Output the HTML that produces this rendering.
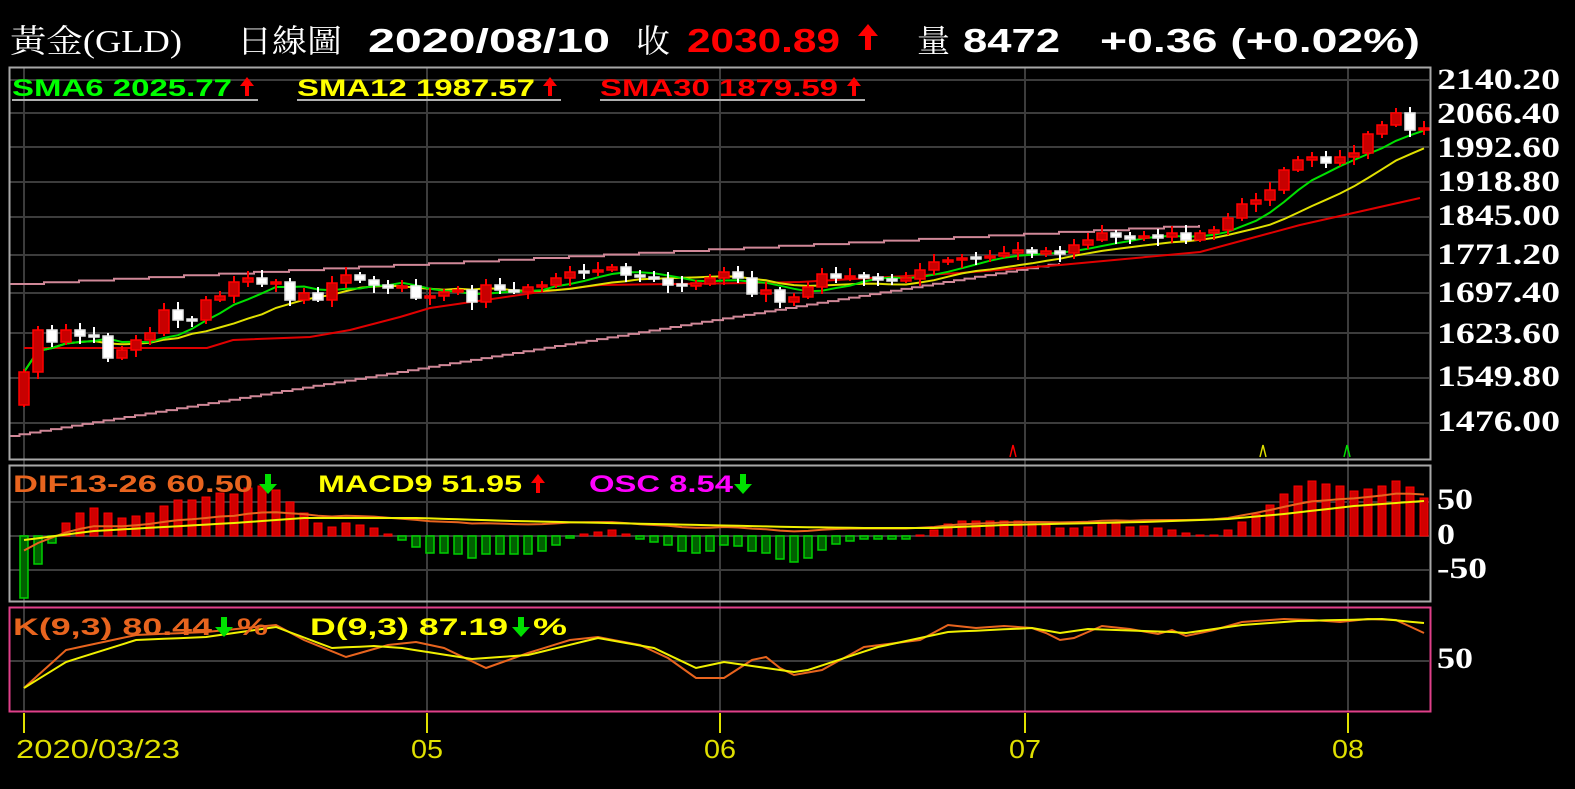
<!DOCTYPE html>
<html><head><meta charset="utf-8"><style>
html,body{margin:0;padding:0;background:#000;width:1575px;height:789px;overflow:hidden}
svg{display:block}
.h{font-family:"Liberation Serif","Noto Serif CJK SC","Noto Sans CJK TC",serif;fill:#fff}
.b{font-family:"Liberation Sans","Noto Sans CJK TC",sans-serif;font-weight:bold}
.n{font-family:"Liberation Sans",sans-serif;font-weight:bold}
.r{font-family:"Liberation Serif",serif;font-weight:bold;fill:#fff}
.x{font-family:"Liberation Sans",sans-serif;fill:#e0e000}
</style></head><body>
<svg id="s" width="1575" height="789" viewBox="0 0 1575 789" xmlns="http://www.w3.org/2000/svg">
<rect width="1575" height="789" fill="#000"/>
<text class="h" x="10" y="52" font-size="32" textLength="172" lengthAdjust="spacingAndGlyphs">黃金(GLD)</text>
<text class="h" x="237" y="52" font-size="32" textLength="105" lengthAdjust="spacingAndGlyphs">日線圖</text>
<text class="b" x="368" y="52" font-size="33" fill="#fff" textLength="242" lengthAdjust="spacingAndGlyphs">2020/08/10</text>
<text class="h" x="636" y="52" font-size="32" textLength="34" lengthAdjust="spacingAndGlyphs">收</text>
<text class="b" x="687" y="52" font-size="33" fill="#ff0000" textLength="153" lengthAdjust="spacingAndGlyphs">2030.89</text>
<path d="M868 24 L878 36 L871 36 L871 50 L865 50 L865 36 L858 36 Z" fill="#ff0000"/>
<text class="h" x="917" y="52" font-size="32" textLength="33" lengthAdjust="spacingAndGlyphs">量</text>
<text class="b" x="963" y="52" font-size="33" fill="#fff" textLength="97" lengthAdjust="spacingAndGlyphs">8472</text>
<text class="b" x="1100" y="52" font-size="33" fill="#fff" textLength="320" lengthAdjust="spacingAndGlyphs">+0.36 (+0.02%)</text>

<g id="grid" stroke="#3c3c3c" stroke-width="2" fill="none">
<line x1="10" y1="80" x2="1429" y2="80"/><line x1="10" y1="113" x2="1429" y2="113"/><line x1="10" y1="147" x2="1429" y2="147"/><line x1="10" y1="182" x2="1429" y2="182"/><line x1="10" y1="217" x2="1429" y2="217"/><line x1="10" y1="255" x2="1429" y2="255"/><line x1="10" y1="293" x2="1429" y2="293"/><line x1="10" y1="333" x2="1429" y2="333"/><line x1="10" y1="378" x2="1429" y2="378"/><line x1="10" y1="423" x2="1429" y2="423"/>
<line x1="10" y1="502" x2="1429" y2="502"/><line x1="10" y1="536" x2="1429" y2="536"/><line x1="10" y1="570" x2="1429" y2="570"/>
<line x1="10" y1="661" x2="1429" y2="661"/>
<line x1="24" y1="68" x2="24" y2="712"/><line x1="427" y1="68" x2="427" y2="712"/><line x1="720" y1="68" x2="720" y2="712"/><line x1="1025" y1="68" x2="1025" y2="712"/><line x1="1348" y1="68" x2="1348" y2="712"/>
</g>
<g id="dyn"></g>
<rect x="9.5" y="67.5" width="1421" height="392" fill="none" stroke="#a8a8a8" stroke-width="2"/>
<rect x="9.5" y="465.5" width="1421" height="136" fill="none" stroke="#a8a8a8" stroke-width="2"/>
<rect x="9.5" y="607.5" width="1421" height="104" fill="none" stroke="#e0408a" stroke-width="2"/>

<path d="M1010 457 L1013 445 L1016 457" stroke="#ff0000" stroke-width="1.5" fill="none"/>
<path d="M1260 457 L1263 445 L1266 457" stroke="#e0e000" stroke-width="1.5" fill="none"/>
<path d="M1344 457 L1347 445 L1350 457" stroke="#00e000" stroke-width="1.5" fill="none"/>

<text class="n" x="12" y="96" font-size="24" fill="#00ff00" textLength="220" lengthAdjust="spacingAndGlyphs">SMA6 2025.77</text>
<text class="n" x="297" y="96" font-size="24" fill="#ffff00" textLength="238" lengthAdjust="spacingAndGlyphs">SMA12 1987.57</text>
<text class="n" x="600" y="96" font-size="24" fill="#ff0000" textLength="238" lengthAdjust="spacingAndGlyphs">SMA30 1879.59</text>
<g fill="#ff0000">
<path d="M247 77 L254 86 L249 86 L249 96 L245 96 L245 86 L240 86 Z"/>
<path d="M550 77 L557 86 L552 86 L552 96 L548 96 L548 86 L543 86 Z"/>
<path d="M854 77 L861 86 L856 86 L856 96 L852 96 L852 86 L847 86 Z"/>
</g>
<g stroke="#b0b0b0" stroke-width="2"><line x1="12" y1="100" x2="258" y2="100"/><line x1="297" y1="100" x2="561" y2="100"/><line x1="600" y1="100" x2="865" y2="100"/></g>

<text class="n" x="13" y="492" font-size="24" fill="#e8641e" textLength="240" lengthAdjust="spacingAndGlyphs">DIF13-26 60.50</text>
<path d="M268 494 L277 484 L271 484 L271 474 L265 474 L265 484 L259 484 Z" fill="#00e000"/>
<text class="n" x="318" y="492" font-size="24" fill="#ffff00" textLength="204" lengthAdjust="spacingAndGlyphs">MACD9 51.95</text>
<path d="M538 474 L545 483 L540 483 L540 493 L536 493 L536 483 L531 483 Z" fill="#ff0000"/>
<text class="n" x="589" y="492" font-size="24" fill="#ff00ff" textLength="144" lengthAdjust="spacingAndGlyphs">OSC 8.54</text>
<path d="M743 494 L752 484 L746 484 L746 474 L740 474 L740 484 L734 484 Z" fill="#00e000"/>

<text class="n" x="13" y="635" font-size="24" fill="#e8641e" textLength="199" lengthAdjust="spacingAndGlyphs">K(9,3) 80.44</text>
<path d="M224 637 L233 627 L227 627 L227 617 L221 617 L221 627 L215 627 Z" fill="#00e000"/>
<text class="n" x="237" y="635" font-size="24" fill="#e8641e" textLength="31" lengthAdjust="spacingAndGlyphs">%</text>
<text class="n" x="310" y="635" font-size="24" fill="#ffff00" textLength="198" lengthAdjust="spacingAndGlyphs">D(9,3) 87.19</text>
<path d="M521 637 L530 627 L524 627 L524 617 L518 617 L518 627 L512 627 Z" fill="#00e000"/>
<text class="n" x="533" y="635" font-size="24" fill="#ffff00" textLength="34" lengthAdjust="spacingAndGlyphs">%</text>

<g class="r" font-size="30">
<text x="1437" y="89" textLength="123" lengthAdjust="spacingAndGlyphs">2140.20</text>
<text x="1437" y="123" textLength="123" lengthAdjust="spacingAndGlyphs">2066.40</text>
<text x="1437" y="157" textLength="123" lengthAdjust="spacingAndGlyphs">1992.60</text>
<text x="1437" y="191" textLength="123" lengthAdjust="spacingAndGlyphs">1918.80</text>
<text x="1437" y="225" textLength="123" lengthAdjust="spacingAndGlyphs">1845.00</text>
<text x="1437" y="264" textLength="123" lengthAdjust="spacingAndGlyphs">1771.20</text>
<text x="1437" y="302" textLength="123" lengthAdjust="spacingAndGlyphs">1697.40</text>
<text x="1437" y="343" textLength="123" lengthAdjust="spacingAndGlyphs">1623.60</text>
<text x="1437" y="386" textLength="123" lengthAdjust="spacingAndGlyphs">1549.80</text>
<text x="1437" y="431" textLength="123" lengthAdjust="spacingAndGlyphs">1476.00</text>
<text x="1437" y="509" textLength="36" lengthAdjust="spacingAndGlyphs">50</text>
<text x="1437" y="544" textLength="18" lengthAdjust="spacingAndGlyphs">0</text>
<text x="1437" y="578" textLength="50" lengthAdjust="spacingAndGlyphs">-50</text>
<text x="1437" y="668" textLength="36" lengthAdjust="spacingAndGlyphs">50</text>
</g>

<g stroke="#e0e000" stroke-width="2"><line x1="24" y1="713" x2="24" y2="733"/><line x1="427" y1="713" x2="427" y2="733"/><line x1="720" y1="713" x2="720" y2="733"/><line x1="1025" y1="713" x2="1025" y2="733"/><line x1="1348" y1="713" x2="1348" y2="733"/></g>
<g class="x" font-size="26">
<text x="16" y="758" textLength="164" lengthAdjust="spacingAndGlyphs">2020/03/23</text>
<text x="411" y="758" textLength="32" lengthAdjust="spacingAndGlyphs">05</text>
<text x="704" y="758" textLength="32" lengthAdjust="spacingAndGlyphs">06</text>
<text x="1009" y="758" textLength="32" lengthAdjust="spacingAndGlyphs">07</text>
<text x="1332" y="758" textLength="32" lengthAdjust="spacingAndGlyphs">08</text>
</g>
</svg>
<script>
(function(){
var C=[372,330,342,330,336,336,358,350,340,333,310,320,320,300,296,282,278,284,282,300,293,300,283,275,280,285,288,286,298,296,292,290,302,285,290,292,287,285,278,272,272,270,267,275,277,279,285,285,284,278,272,278,294,290,302,297,287,274,278,276,277,280,280,279,270,262,260,258,258,256,253,250,253,252,253,245,240,233,237,238,236,237,233,240,233,230,218,204,200,190,170,160,157,163,157,153,134,125,113,130,128];
var H=[-62,-28,-7,13,23,28,23,18,20,23,30,36,36,39,43,42,48,50,46,34,23,13,9,13,11,8,2,-4,-11,-17,-17,-18,-22,-18,-18,-18,-18,-15,-9,-2,2,4,6,2,-3,-6,-9,-15,-17,-15,-9,-10,-15,-17,-23,-26,-22,-14,-8,-5,-3,-3,-3,-3,1,6,12,15,15,15,15,15,14,12,8,8,9,13,13,9,10,8,6,3,1,1,6,14,22,31,42,50,55,52,50,45,47,50,55,49,38];
var N=C.length,X=function(i){return 24+14*i};
var o='';
function interp(pts,i){for(var k=0;k<pts.length-1;k++){if(i>=pts[k][0]&&i<=pts[k+1][0]){var t=(i-pts[k][0])/(pts[k+1][0]-pts[k][0]);return pts[k][1]+t*(pts[k+1][1]-pts[k][1]);}}return pts[pts.length-1][1];}
function stairs(x1,y1,x2,y2,step){var s='M'+x1+' '+y1.toFixed(1),n=Math.round((x2-x1)/step);for(var k=1;k<=n;k++){var x=x1+k*step,y=y1+(y2-y1)*k/n;s+=' L'+x+' '+(y1+(y2-y1)*(k-1)/n).toFixed(1)+' L'+x+' '+y.toFixed(1);}return s;}
o+='<path d="'+stairs(9,284,1209,225,35)+'" stroke="#d08898" stroke-width="2" fill="none"/>';
o+='<path d="'+stairs(9,436,1059,263,10.5)+'" stroke="#d08898" stroke-width="2" fill="none"/>';
function ma(p){var pts=[];for(var i=0;i<N;i++){var s=0,c=0;for(var j=Math.max(0,i-p+1);j<=i;j++){s+=C[j];c++;}var v=s/c;pts.push(X(i)+','+v.toFixed(1));}return pts.join(' ');}
var RX=[[24,348],[207,348],[233,340],[310,337],[350,330],[400,317],[430,308],[540,292],[600,285],[750,283],[800,282],[960,273],[1060,265],[1200,252],[1300,225],[1420,198]];
var rp=[];RX.forEach(function(p){rp.push(p[0]+','+p[1]);});
o+='<polyline points="'+rp.join(' ')+'" stroke="#e00000" stroke-width="2" fill="none"/>';
o+='<polyline points="'+ma(12)+'" stroke="#e0e000" stroke-width="2" fill="none"/>';
o+='<polyline points="'+ma(6)+'" stroke="#00e000" stroke-width="2" fill="none"/>';
for(var i=0;i<N;i++){var op=i==0?405:C[i-1],cl=C[i],x=X(i);
 var top=Math.min(op,cl),bot=Math.max(op,cl);if(bot-top<2){top-=1;bot+=1;}
 var w1=3+((i*7)%6),w2=2+((i*5)%7);
 var up=cl<op,col=up?'#ff0000':'#ffffff';
 o+='<line x1="'+x+'" y1="'+(top-w1)+'" x2="'+x+'" y2="'+(bot+w2)+'" stroke="'+col+'" stroke-width="2"/>';
 o+='<rect x="'+(x-5)+'" y="'+top+'" width="10" height="'+(bot-top)+'" fill="'+(up?'#c80000':'#ffffff')+'" stroke="'+(up?'#ff0000':'#e8e8e8')+'" stroke-width="1.5"/>';}
for(var i=0;i<N;i++){var h=H[i],x=X(i),z=536;if(h>=0){o+='<rect x="'+(x-4)+'" y="'+(z-h)+'" width="8" height="'+Math.max(h,1)+'" fill="#d00000" stroke="#ff0000" stroke-width="1"/>';}else{o+='<rect x="'+(x-4)+'" y="'+z+'" width="8" height="'+(-h)+'" fill="#006000" stroke="#00d000" stroke-width="1.5"/>';}}
var M=[[0,540],[5,531],[10,527],[15,523],[20,518],[28,518],[35,521],[45,524],[55,527],[60,528],[65,528],[70,525],[80,522],[86,519],[90,514],[95,506],[100,501]];
var pm=[],pd=[];for(var i=0;i<N;i++){var m=interp(M,i);pm.push(X(i)+','+m.toFixed(1));pd.push(X(i)+','+(m-H[i]*0.17).toFixed(1));}
o+='<polyline points="'+pd.join(' ')+'" stroke="#e8641e" stroke-width="2" fill="none"/>';
o+='<polyline points="'+pm.join(' ')+'" stroke="#f0f000" stroke-width="2" fill="none"/>';
var D=[[0,688],[3,662],[8,640],[13,637],[18,627],[22,648],[25,646],[27,648],[32,659],[36,655],[41,638],[45,648],[48,668],[50,662],[55,672],[56,670],[61,647],[66,632],[72,628],[74,633],[76,629],[82,632],[83,633],[87,625],[91,621],[97,619],[100,623]];
var K=[[0,688],[3,650],[8,635],[13,632],[18,625],[20,640],[23,657],[26,645],[28,642],[30,648],[33,668],[36,653],[39,640],[41,637],[44,645],[46,658],[48,678],[50,678],[52,660],[53,657],[54,668],[55,675],[57,670],[60,647],[64,640],[66,625],[68,628],[70,626],[72,628],[73,633],[74,640],[75,638],[77,626],[79,629],[81,634],[82,630],[83,636],[85,630],[87,622],[90,619],[92,620],[94,622],[96,619],[98,620],[100,633]];
var pk=[],pdd=[];for(var i=0;i<N;i++){pk.push(X(i)+','+interp(K,i).toFixed(1));pdd.push(X(i)+','+interp(D,i).toFixed(1));}
o+='<polyline points="'+pk.join(' ')+'" stroke="#e8641e" stroke-width="2" fill="none"/>';
o+='<polyline points="'+pdd.join(' ')+'" stroke="#f0f000" stroke-width="2" fill="none"/>';
document.getElementById('dyn').innerHTML=o;
})();
</script>
</body></html>
